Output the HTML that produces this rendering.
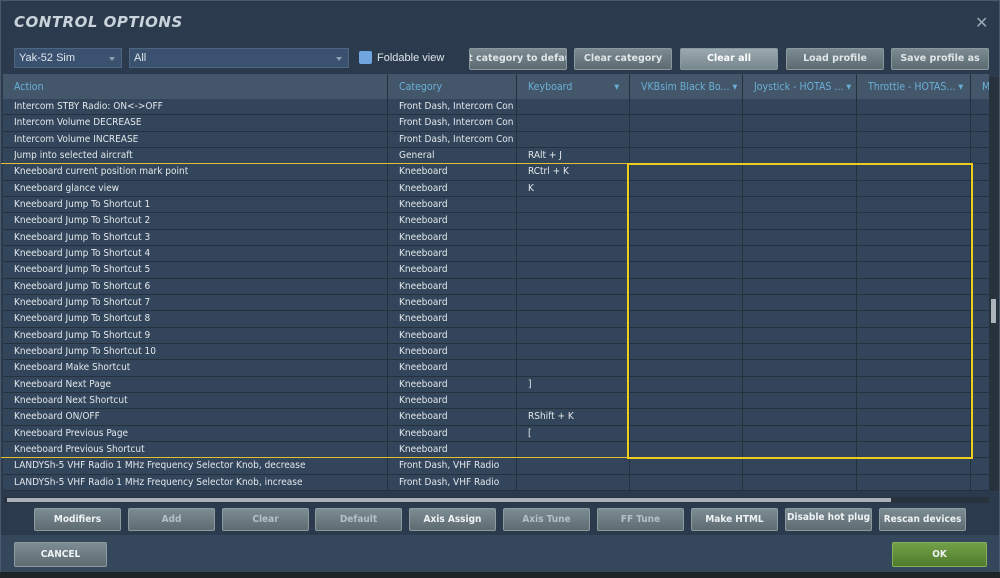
<!DOCTYPE html>
<html><head><meta charset="utf-8"><style>
*{margin:0;padding:0;box-sizing:border-box}
body{width:1000px;height:578px;overflow:hidden;background:#1e2328;font-family:"Liberation Sans","DejaVu Sans",sans-serif;position:relative}
.win{position:absolute;left:0;top:0;width:1000px;height:572px;background:#2b3b4d;border:1px solid #4a5a6a}
.title{position:absolute;left:13px;top:12px;font:italic bold 15px "DejaVu Sans",sans-serif;color:#c9d3dc;letter-spacing:0.5px}
.x{position:absolute;left:974px;top:12px;color:#9aa8b4;font-size:16px}
.sel{position:absolute;top:47px;height:20px;background:#3a5270;border:1px solid #4d6682;color:#dfe6ec;font-size:11px;padding:3px 4px}
.sel:after{content:"";position:absolute;right:6px;top:8px;border:3px solid transparent;border-top:4px solid #8ea0b0}
.cb{position:absolute;left:358px;top:50px;width:13px;height:13px;background:#6fa6e0;border-radius:2px}
.lbl{position:absolute;left:376px;top:51px;color:#dde4ea;font-size:11px}
.btn{position:absolute;height:22px;background:linear-gradient(#7b8b91,#5d6b71);border:1px solid #8a999e;color:#dfe5e8;font:bold 9.5px "DejaVu Sans",sans-serif;text-align:center;line-height:20px;border-radius:2px;white-space:nowrap;overflow:hidden}
.hdr{position:absolute;left:2px;top:73px;width:986px;height:25px;background:#44566a}
.h{position:absolute;top:80px;color:#6ab0d6;font:10.5px "DejaVu Sans Condensed","DejaVu Sans",sans-serif}
.grid{position:absolute;left:2px;top:98px;width:986px;height:392px;background:#33455a;overflow:hidden}
.r{position:absolute;left:0;width:986px;height:16.33px;border-bottom:1px solid #25313c;font:10px "DejaVu Sans Condensed","DejaVu Sans",sans-serif;color:#e3e8ec}
.r span{position:absolute;top:2px;white-space:nowrap;overflow:hidden}
.vl{position:absolute;top:73px;width:1px;height:417px;background:#25313d}
.bb{position:absolute;top:507px;height:23px;width:87px;background:linear-gradient(#7c8c92,#5e6c72);border:1px solid #8d9ca1;color:#eef2f4;font:bold 10px "DejaVu Sans Condensed","DejaVu Sans",sans-serif;text-align:center;line-height:21px;border-radius:2px;white-space:nowrap}
.dim{color:#b4c0c6}
</style></head><body>
<div class="win">
<div class="title">CONTROL OPTIONS</div>
<div class="x">✕</div>
<div class="sel" style="left:13px;width:108px">Yak-52 Sim</div>
<div class="sel" style="left:128px;width:220px">All</div>
<div class="cb"></div><div class="lbl">Foldable view</div>
<div class="btn" style="left:468px;top:47px;width:98px;text-indent:-14px">set category to default</div>
<div class="btn" style="left:573px;top:47px;width:98px">Clear category</div>
<div class="btn" style="left:679px;top:47px;width:98px;background:linear-gradient(#9aaab0,#76868c);color:#fff">Clear all</div>
<div class="btn" style="left:785px;top:47px;width:98px">Load profile</div>
<div class="btn" style="left:890px;top:47px;width:98px">Save profile as</div>
<div class="hdr"></div>
<div class="h" style="left:13px">Action</div>
<div class="h" style="left:398px">Category</div>
<div class="h" style="left:527px">Keyboard &nbsp;&nbsp;&nbsp;&nbsp;&nbsp;&nbsp;&nbsp;&nbsp;&nbsp;&nbsp;&nbsp;&nbsp;&nbsp;▾</div>
<div class="h" style="left:640px">VKBsim Black Bo... ▾</div>
<div class="h" style="left:753px">Joystick - HOTAS ... ▾</div>
<div class="h" style="left:867px">Throttle - HOTAS... ▾</div>
<div class="h" style="left:981px">M</div>
<div class="grid" id="g"></div>
<div class="vl" style="left:386px"></div><div class="vl" style="left:515px"></div><div class="vl" style="left:628px"></div><div class="vl" style="left:741px"></div><div class="vl" style="left:855px"></div><div class="vl" style="left:969px"></div>
<div style="position:absolute;left:0;top:162px;width:628px;height:1px;background:#e0c030"></div>
<div style="position:absolute;left:0;top:456px;width:628px;height:1px;background:#e0c030"></div>
<div style="position:absolute;left:626px;top:162px;width:346px;height:296px;border:2px solid #f0cc1e"></div>
<div style="position:absolute;left:988px;top:76px;width:10px;height:414px;background:#27323d"></div>
<div style="position:absolute;left:990px;top:298px;width:5px;height:24px;background:#aab4ba"></div>
<div style="position:absolute;left:3px;top:496px;width:985px;height:6px;background:#27323d"></div>
<div style="position:absolute;left:6px;top:497px;width:884px;height:4px;background:#a8b2b8"></div>
<div class="bb" style="left:33px">Modifiers</div>
<div class="bb dim" style="left:127px">Add</div>
<div class="bb dim" style="left:221px">Clear</div>
<div class="bb dim" style="left:314px">Default</div>
<div class="bb" style="left:408px">Axis Assign</div>
<div class="bb dim" style="left:502px">Axis Tune</div>
<div class="bb dim" style="left:596px">FF Tune</div>
<div class="bb" style="left:690px">Make HTML</div>
<div class="bb" style="left:784px;line-height:17px">Disable hot plug</div>
<div class="bb" style="left:878px">Rescan devices</div>
<div style="position:absolute;left:0;top:534px;width:998px;height:37px;background:#34475b"></div>
<div class="bb" style="left:13px;top:541px;width:93px;height:25px;line-height:23px">CANCEL</div>
<div class="bb" style="left:891px;top:541px;width:95px;height:25px;line-height:23px;background:linear-gradient(#72a048,#4f7c2c);border-color:#86b05a">OK</div>
</div>
<script>
var rows=[["Intercom STBY Radio: ON<->OFF","Front Dash, Intercom Con",""],["Intercom Volume DECREASE","Front Dash, Intercom Con",""],["Intercom Volume INCREASE","Front Dash, Intercom Con",""],["Jump into selected aircraft","General","RAlt + J"],["Kneeboard current position mark point","Kneeboard","RCtrl + K"],["Kneeboard glance view","Kneeboard","K"],["Kneeboard Jump To Shortcut  1","Kneeboard",""],["Kneeboard Jump To Shortcut  2","Kneeboard",""],["Kneeboard Jump To Shortcut  3","Kneeboard",""],["Kneeboard Jump To Shortcut  4","Kneeboard",""],["Kneeboard Jump To Shortcut  5","Kneeboard",""],["Kneeboard Jump To Shortcut  6","Kneeboard",""],["Kneeboard Jump To Shortcut  7","Kneeboard",""],["Kneeboard Jump To Shortcut  8","Kneeboard",""],["Kneeboard Jump To Shortcut  9","Kneeboard",""],["Kneeboard Jump To Shortcut 10","Kneeboard",""],["Kneeboard Make Shortcut","Kneeboard",""],["Kneeboard Next Page","Kneeboard","]"],["Kneeboard Next Shortcut","Kneeboard",""],["Kneeboard ON/OFF","Kneeboard","RShift + K"],["Kneeboard Previous Page","Kneeboard","["],["Kneeboard Previous Shortcut","Kneeboard",""],["LANDYSh-5 VHF Radio 1 MHz Frequency Selector Knob, decrease","Front Dash, VHF Radio",""],["LANDYSh-5 VHF Radio 1 MHz Frequency Selector Knob, increase","Front Dash, VHF Radio",""],["LANDYSh-5 VHF Radio 25 kHz Frequency Selector Knob, decrease","Front Dash, VHF Radio",""]];
var g=document.getElementById('g'),h='';
rows.forEach(function(r,i){h+='<div class="r" style="top:'+(i*16.33)+'px"><span style="left:11px;max-width:372px">'+r[0].replace(/</g,'&lt;').replace(/>/g,'&gt;')+'</span><span style="left:396px;max-width:116px">'+r[1]+'</span><span style="left:525px">'+r[2]+'</span></div>';});
g.innerHTML=h;
</script>
</body></html>
